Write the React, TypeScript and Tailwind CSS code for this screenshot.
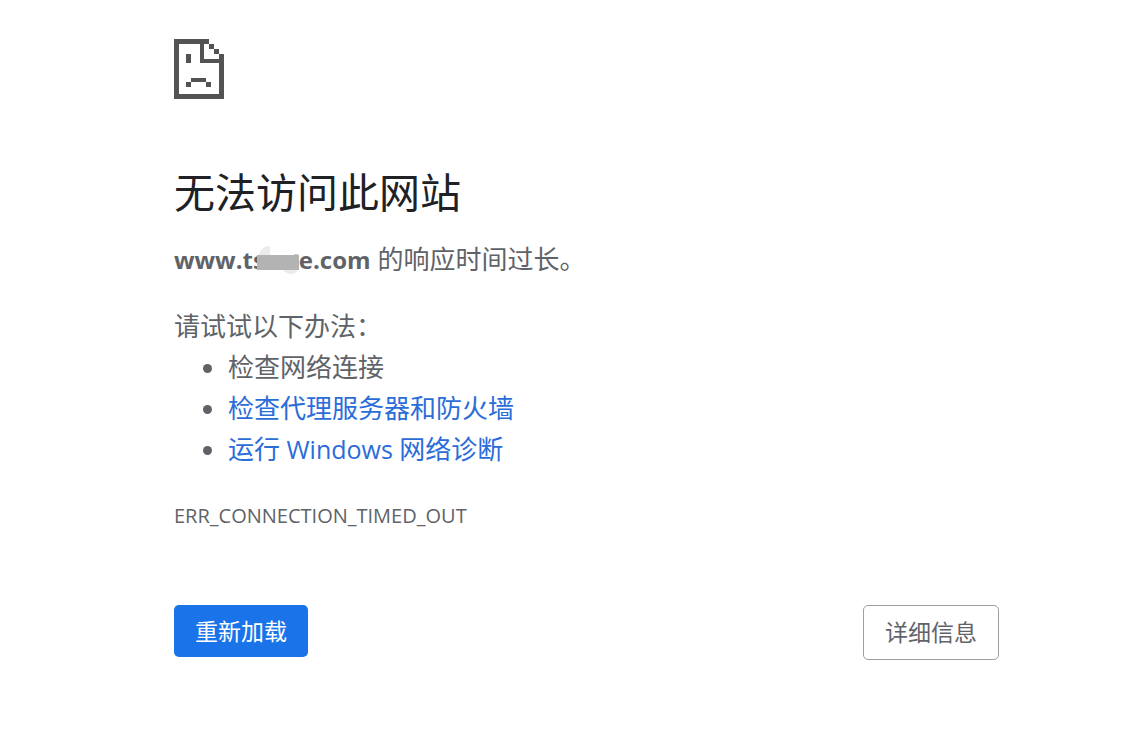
const TIPS = [
  { id: "network", label: "检查网络连接" },
  { id: "proxy", label: "检查代理服务器和防火墙", href: "#proxy" },
  {
    id: "diagnose",
    label: <>运行<span className="text-[25px]"> Windows </span>网络诊断</>,
    href: "#diagnose",
  },
];

function SadPageIcon() {
  return (
    <svg width="50" height="60" viewBox="0 0 50 60" fill="#535353" shapeRendering="crispEdges" aria-hidden="true">
      {/* page outline with the folded corner */}
      <path d="M0 0h35v5H30v15h15v-5h5v45H0zM5 5v50h40V24H26V5z" fillRule="evenodd" />
      <path d="M35 5h5v5h-5zM40 10h5v5h-5z" />
      {/* face */}
      <path d="M12 15h5v9h-5zM17 39h15v4H17zM12 43h5v5h-5zM32 43h5v5h-5z" />
    </svg>
  );
}

// Smudge that hides the middle of the host name
function Redaction() {
  return (
    <svg width="42" height="36" viewBox="0 0 42 36" className="-ml-2 inline-block align-middle" aria-hidden="true">
      <path d="M2 10C3 4 8 1 13 1v13H2zM25 23h16c0 4-4 6-7 6s-7-2-9-6z" fill="#ebebed" />
      <path d="M0 10h36l3-1 3 1v15H0z" fill="#b3b3b3" />
    </svg>
  );
}

export default function App() {
  return (
    <main className="min-h-screen bg-white pt-[39px] pr-[125px] pb-16 pl-[174px] font-['Open_Sans','Noto_Sans_CJK_SC',sans-serif] text-[26px] leading-[41px] text-[#5f6368]">
      <SadPageIcon />

      <h1 className="mt-[63px] text-[41px] leading-[60px] text-[#202124]">无法访问此网站</h1>

      <p className="mt-[17px] whitespace-nowrap">
        <strong className="text-2xl leading-[41px] font-bold">
          www.ts
          <Redaction />
          e.com
        </strong>{" "}
        的响应时间过长。
      </p>

      <div className="mt-[25px]">
        <p>请试试以下办法：</p>
        <ul className="list-disc pl-[54px]">
          {TIPS.map((tip) => (
            <li key={tip.id}>
              {tip.href ? <a href={tip.href} className="text-[#2b6cd9]">{tip.label}</a> : tip.label}
            </li>
          ))}
        </ul>
      </div>

      <p className="mt-[25px] text-xl leading-[41px]">ERR_CONNECTION_TIMED_OUT</p>

      <div className="mt-[69px] flex items-start justify-between text-[23px]">
        <button type="button" className="rounded-[5px] bg-[#1a73e8] px-[21px] leading-[52px] text-white">重新加载</button>
        <button type="button" className="rounded-[5px] border border-[#9aa0a6] px-[21px] leading-[53px]">详细信息</button>
      </div>
    </main>
  );
}
